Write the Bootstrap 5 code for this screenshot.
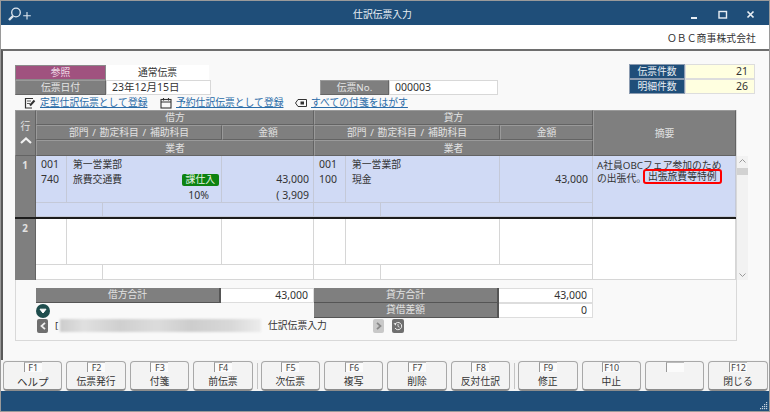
<!DOCTYPE html>
<html lang="ja"><head><meta charset="utf-8"><title>仕訳伝票入力</title>
<link rel="stylesheet" href="https://cdn.jsdelivr.net/npm/bootstrap@5.3.0/dist/css/bootstrap.min.css">
<style>
html,body{margin:0;padding:0;background:#fff}
body{font-family:"Noto Sans","Noto Sans CJK JP",sans-serif;font-size:9.8px;line-height:1;color:#333;overflow:hidden}
.app-win{width:770px;height:412px;border:1px solid #9a9a9a;background:#fff}
.title-bar{height:24px;background:#1f4e79;color:#e8eef4;font-size:9.8px;padding:3px 4px 0 9px}
.title-side{flex:1 1 0}
.title-ico{margin-left:-4px}
.win-btns{gap:17px;padding-right:10px}
.co-bar{height:24px;padding:4px 13px 0 0;font-size:9.8px;color:#333;letter-spacing:.1px}
.body-area{height:311px;background:#f9f9f9;border-top:2px solid #6e6e6e;border-left:2px solid #5a5a5a;padding:14px 0 0 12px;position:relative}
.fld{height:15px;display:flex;align-items:center;justify-content:center}
.lab-gray{background:#7f7f7f;color:#e4e4e4;border:1px solid #9a9a9a;border-right-color:#666;border-bottom-color:#666}
.lab-purple{background:#a0527f;color:#f0dbe7;border:1px solid #8b8b8b}
.lab-blue{background:#1f4e79;color:#e8eef4;border:1px solid #8b9bb0;width:56px}
.w-lab{width:91px}
.w-no{width:69px;margin-left:109px}
.val-plain{width:103px;background:#fff}
.val-input{background:#fff;border:1px solid #d8d8d8;justify-content:flex-start;padding-left:5px;font-size:10.5px}
.w-date{width:105px}
.w-num{width:109px}
.val-yel{width:70px;background:#ffffe0;border:1px solid #ddd;justify-content:flex-end;padding-right:6px;font-size:10.5px}
.right-block{margin-right:14px;margin-top:-1px}
.link-row{height:15px;padding:1px 0 0 9px;align-items:center}
.link-row a{color:#2a6ca8;text-decoration:underline;font-size:9.8px;white-space:nowrap}
.lk1{margin-left:4px;width:120px}
.lk2{margin-left:4px;width:119px}
.lk3{margin-left:4px}
.panel-box{width:722px;height:231px;border-bottom:1px solid #d9d9d9;box-shadow:inset 1px 0 #d9d9d9,inset -1px 0 #d9d9d9}
.slip-grid{display:grid;grid-template-columns:21px 31px 36px 119px 92px 32px 35px 119px 93px 143px;grid-template-rows:15px 15px 16px 47px 14px 2px 46px 15px 1px}
.hc{background:#7f7f7f;color:#e2e2e2;display:flex;align-items:center;justify-content:center;border-right:1px solid #636363;border-bottom:1px solid #636363;border-top:1px solid #9a9a9a;border-left:1px solid #9a9a9a;padding-top:1px;word-spacing:1.2px}
.hc-row{grid-row:1/4;grid-column:1;flex-direction:column;gap:6px;padding-top:0}
.rn{background:#7f7f7f;color:#e2e2e2;font-weight:700;display:flex;justify-content:center;padding-top:5px;border-right:1px solid #636363;grid-column:1}
.cell{border-right:1px solid #c4c9d8;border-bottom:1px solid #c4c9d8;padding:0 4px;display:flex;flex-direction:column;justify-content:space-around}
.blue-c{background:#d0daf5}
.white-c{background:#fff;border-color:#d6d6d6}
.thick{background:#1c1c1c;grid-column:1/11}
.ln{height:15px;display:flex;align-items:center;justify-content:space-between;white-space:nowrap;flex:none}
.ln-3{margin-top:1px}
.rt{justify-content:flex-end;font-size:10.5px}
.pct{padding-right:8px}
.code{font-size:10.5px}
.cell-tall{padding:1px 4px 2px 5px;justify-content:flex-start}
.name-c{padding-left:6px}
.tax-pill{background:#0d8210;color:#e6f5e6;padding:2px 4px;border-radius:2px;height:12px;display:flex;align-items:center;margin-right:-2px}
.memo{padding:3px 4px 0;line-height:13px;display:block;white-space:normal}
.maru{letter-spacing:-5px}
.hi-box{border:2px solid #f00;border-radius:3px;padding:0 3px;display:inline-block;line-height:11px;height:15px;vertical-align:top;margin:-3px 0 0 2px;white-space:nowrap}
.scroll-track{position:absolute;left:734px;top:105px;width:11px;height:124px;background:#f2f2f2;display:flex;flex-direction:column;justify-content:space-between;align-items:center;padding:3px 0}
.scroll-thumb{position:absolute;left:0;top:12px;width:11px;height:7px;background:#d2d2d2}
.tot-grid{display:grid;grid-template-columns:21px 185px 93px 185px 94px;grid-template-rows:15px 15px;margin-top:7px}
.tl{background:#7f7f7f;color:#e2e2e2;display:flex;align-items:center;justify-content:center;border-right:2px solid #555;border-bottom:1px solid #555}
.tv{background:#fff;border:1px solid #ddd;border-left:0;display:flex;align-items:center;justify-content:flex-end;padding-right:5px;font-size:10.5px}
.dot-wrap{grid-column:2;display:flex;align-items:center}
.dot-btn{width:14px;height:14px;border-radius:50%;background:#1e4d4d;display:flex;align-items:center;justify-content:center}
.nav-row{height:15px;padding-left:22px;align-items:center}
.sq-btn{width:11px;height:14px;border-radius:2px;display:flex;align-items:center;justify-content:center;flex:none}
.sq-dark{background:#6f6f6f}
.sq-light{background:#c9c9c9}
.sq-hist{margin-left:8px;width:12px}
.nav-br{margin-left:7px;width:4px}
.nav-ttl{margin-left:7px;width:105px}
.blur-bar{width:201px;height:13px;margin-left:1px;background:linear-gradient(90deg,#ccc,#e0e0e0 12%,#cfcfcf 30%,#dcdcdc 48%,#cdcdcd 65%,#d8d8d8 85%,#ececec);filter:blur(1px)}
.fkey-bar{height:31px;background:#f4f4f4;padding:1px 0 0 2px;gap:4px;align-items:flex-start}
.fkey{width:59.4px;height:30px;padding:0;background:#f3f3f3;border:1px solid #a8a8a8;border-bottom:2px solid #8c8c8c;border-radius:4px;color:#333;font-size:9.8px;line-height:1;display:flex;flex-direction:column;align-items:center;flex:none}
.fkey-lab{width:18px;height:10px;margin-top:0;border-left:1px solid #999;border-top:1px solid #bbb;background:#fbfbfb;font-size:9px;display:flex;align-items:center;justify-content:center;color:#444}
.fkey-txt{margin-top:5px;height:10px;font-size:9.8px;white-space:nowrap}
.fkey-big{font-size:10.5px}
.fkey-sep{width:1px;height:26px;background:#c4c4c4;margin:2px -1px 2px 0;flex:none}
.foot-bar{height:20px;background:#1f4e79;justify-content:flex-end;align-items:flex-end;padding:0 1px 1px 0}
.g-l1{grid-column:2/6}.g-r1{grid-column:6/10}.g-sum{grid-column:10;grid-row:1/4}
.g-l2{grid-column:2/5}.g-la{grid-column:5}.g-r2{grid-column:6/9}.g-ra{grid-column:9}
.g-n1{grid-row:4/7}.g-n2{grid-row:7/9}
.s-a{grid-column:3/5}.s-b{grid-column:7/9}
.b-a{grid-column:2/4}.b-b{grid-column:4/6}.b-c{grid-column:6/8}.b-d{grid-column:8/10}
.memo1{grid-column:10;grid-row:4/6}.memo2{grid-column:10;grid-row:7/9}
.r7{grid-row:7}.r8{grid-row:8}.c2{grid-column:2}.c5{grid-column:5}.c6{grid-column:6}.c9{grid-column:9}
.th-r{grid-row:6}
.c3{grid-column:3}
</style></head><body>
<div class="app-win d-flex flex-column">
 <div class="title-bar d-flex align-items-center">
  <div class="title-side d-flex align-items-center">
   <svg class="title-ico" width="27" height="18" viewBox="0 0 27 18" fill="none" stroke="#dfe7ef"><circle cx="10" cy="6.5" r="4.3" stroke-width="1.3"/><path d="M7 10 L3 14" stroke-width="2.4"/><path d="M21 6v7.5M17.2 9.7h7.6" stroke-width="1.1"/></svg>
  </div>
  <div>仕訳伝票入力</div>
  <div class="title-side d-flex justify-content-end win-btns align-items-center">
   <svg width="9" height="9" viewBox="0 0 9 9"><rect x="0" y="7" width="6" height="2" fill="#e8eef4"/></svg>
   <svg width="12" height="10" viewBox="0 0 12 10" fill="none" stroke="#e8eef4"><rect x="2" y="1.5" width="7.5" height="6.5" stroke-width="1.4"/></svg>
   <svg width="9" height="9" viewBox="0 0 9 9" fill="none" stroke="#e8eef4" stroke-width="1.7"><path d="M1.5 1.5l6 6M7.5 1.5l-6 6"/></svg>
  </div>
 </div>
 <div class="co-bar d-flex align-items-center justify-content-end">ＯＢＣ商事株式会社</div>
 <div class="body-area">
  <div class="d-flex justify-content-between">
   <div>
    <div class="d-flex"><div class="fld lab-purple w-lab">参照</div><div class="fld val-plain">通常伝票</div></div>
    <div class="d-flex"><div class="fld lab-gray w-lab">伝票日付</div><div class="fld val-input w-date">23年12月15日</div><div class="fld lab-gray w-no">伝票No.</div><div class="fld val-input w-num">000003</div></div>
   </div>
   <div class="right-block">
    <div class="d-flex"><div class="fld lab-blue">伝票件数</div><div class="fld val-yel">21</div></div>
    <div class="d-flex"><div class="fld lab-blue">明細件数</div><div class="fld val-yel">26</div></div>
   </div>
  </div>
  <div class="d-flex link-row">
   <svg width="12" height="12" viewBox="0 0 12 12" fill="none" stroke="#333"><path d="M9 1.5H1.5v9.5H8" stroke-width="1.2"/><path d="M3 4h4M3 6.5h3" stroke-width=".8"/><path d="M6 8.5l4.5-5" stroke-width="2"/></svg>
   <a href="#" class="lk1">定型仕訳伝票として登録</a>
   <svg width="12" height="12" viewBox="0 0 12 12" fill="none" stroke="#333"><rect x="1" y="2.5" width="10" height="8.5" stroke-width="1.1"/><path d="M1 5h10" stroke-width="1"/><path d="M3.5 1v2.5M8.5 1v2.5" stroke-width="1.1"/></svg>
   <a href="#" class="lk2">予約仕訳伝票として登録</a>
   <svg width="12" height="12" viewBox="0 0 12 12" fill="none" stroke="#333"><path d="M3 2.5h8.5v7H3L.5 6z" stroke-width="1"/><rect x="5.5" y="4.5" width="3.5" height="3" fill="#333" stroke="none"/></svg>
   <a href="#" class="lk3">すべての付箋をはがす</a>
  </div>
  <div class="panel-box">
   <div class="slip-grid">
    <div class="hc hc-row"><span>行</span><svg width="12" height="7" viewBox="0 0 12 7" fill="none" stroke="#f2f2f2" stroke-width="2.2"><path d="M1 6l5-4.5L11 6"/></svg></div>
    <div class="hc g-l1">借方</div>
    <div class="hc g-r1">貸方</div>
    <div class="hc g-sum">摘要</div>
    <div class="hc g-l2">部門 / 勘定科目 / 補助科目</div>
    <div class="hc g-la">金額</div>
    <div class="hc g-r2">部門 / 勘定科目 / 補助科目</div>
    <div class="hc g-ra">金額</div>
    <div class="hc g-l1">業者</div>
    <div class="hc g-r1">業者</div>

    <div class="rn g-n1">1</div>
    <div class="cell cell-tall blue-c c2"><div class="ln code">001</div><div class="ln code">740</div></div>
    <div class="cell cell-tall name-c blue-c s-a"><div class="ln">第一営業部</div><div class="ln">旅費交通費<span class="tax-pill">課仕入</span></div><div class="ln ln-3 rt pct">10%</div></div>
    <div class="cell cell-tall blue-c c5"><div class="ln"></div><div class="ln rt">43,000</div><div class="ln ln-3 rt">( 3,909</div></div>
    <div class="cell cell-tall blue-c c6"><div class="ln code">001</div><div class="ln code">100</div></div>
    <div class="cell cell-tall name-c blue-c s-b"><div class="ln">第一営業部</div><div class="ln">現金</div></div>
    <div class="cell cell-tall blue-c c9"><div class="ln"></div><div class="ln rt">43,000</div></div>
    <div class="cell blue-c memo memo1">A社員OBCフェア参加のための出張代<span class="maru">。</span><span class="hi-box">出張旅費等特例</span></div>
    <div class="cell blue-c b-a"></div>
    <div class="cell blue-c b-b"></div>
    <div class="cell blue-c b-c"></div>
    <div class="cell blue-c b-d"></div>
    <div class="thick th-r"></div>

    <div class="rn g-n2">2</div>
    <div class="cell white-c c2 r7"></div>
    <div class="cell white-c s-a r7"></div>
    <div class="cell white-c c5 r7"></div>
    <div class="cell white-c c6 r7"></div>
    <div class="cell white-c s-b r7"></div>
    <div class="cell white-c c9 r7"></div>
    <div class="cell white-c memo2"></div>
    <div class="cell white-c b-a r8"></div>
    <div class="cell white-c b-b r8"></div>
    <div class="cell white-c b-c r8"></div>
    <div class="cell white-c b-d r8"></div>
   </div>
   <div class="tot-grid">
    <div></div><div class="tl">借方合計</div><div class="tv">43,000</div><div class="tl">貸方合計</div><div class="tv">43,000</div>
    <div class="dot-wrap"><div class="dot-btn"><svg width="8" height="6" viewBox="0 0 8 6"><path d="M1 1.2h6L4 5z" fill="#fff" stroke="#fff" stroke-linejoin="round"/></svg></div></div>
    <div class="c3"></div><div class="tl">貸借差額</div><div class="tv">0</div>
   </div>
   <div class="d-flex nav-row">
    <div class="sq-btn sq-dark"><svg width="6" height="8" viewBox="0 0 6 8" fill="none" stroke="#eee" stroke-width="1.8"><path d="M5 .8L1.5 4 5 7.2"/></svg></div>
    <span class="nav-br">[</span>
    <div class="blur-bar"></div>
    <span class="nav-ttl">仕訳伝票入力</span>
    <div class="sq-btn sq-light"><svg width="6" height="8" viewBox="0 0 6 8" fill="none" stroke="#888" stroke-width="1.8"><path d="M1 .8L4.5 4 1 7.2"/></svg></div>
    <div class="sq-btn sq-dark sq-hist"><svg width="10" height="10" viewBox="0 0 10 10" fill="none" stroke="#eee"><path d="M2 3.2A3.6 3.6 0 1 1 2 7" stroke-width="1"/><path d="M5 3v2.4l1.5.8" stroke-width=".8"/><path d="M.5 2.2l2.5 0 0 2.5z" fill="#eee" stroke="none"/></svg></div>
   </div>
  </div>
  <div class="scroll-track">
   <svg width="7" height="4" viewBox="0 0 7 4" fill="none" stroke="#999"><path d="M.5 3.5L3.5.5l3 3"/></svg>
   <div class="scroll-thumb"></div>
   <svg width="7" height="4" viewBox="0 0 7 4" fill="none" stroke="#999"><path d="M.5.5l3 3 3-3"/></svg>
  </div>
 </div>
 <div class="fkey-bar d-flex">
  <button class="btn fkey"><span class="fkey-lab">F1</span><span class="fkey-txt fkey-big">ヘルプ</span></button>
  <button class="btn fkey"><span class="fkey-lab">F2</span><span class="fkey-txt">伝票発行</span></button>
  <button class="btn fkey"><span class="fkey-lab">F3</span><span class="fkey-txt">付箋</span></button>
  <button class="btn fkey"><span class="fkey-lab">F4</span><span class="fkey-txt">前伝票</span></button>
  <div class="fkey-sep"></div>
  <button class="btn fkey"><span class="fkey-lab">F5</span><span class="fkey-txt">次伝票</span></button>
  <button class="btn fkey"><span class="fkey-lab">F6</span><span class="fkey-txt">複写</span></button>
  <button class="btn fkey"><span class="fkey-lab">F7</span><span class="fkey-txt">削除</span></button>
  <button class="btn fkey"><span class="fkey-lab">F8</span><span class="fkey-txt">反対仕訳</span></button>
  <div class="fkey-sep"></div>
  <button class="btn fkey"><span class="fkey-lab">F9</span><span class="fkey-txt">修正</span></button>
  <button class="btn fkey"><span class="fkey-lab">F10</span><span class="fkey-txt">中止</span></button>
  <button class="btn fkey"><span class="fkey-lab"></span><span class="fkey-txt"></span></button>
  <button class="btn fkey"><span class="fkey-lab">F12</span><span class="fkey-txt">閉じる</span></button>
 </div>
 <div class="foot-bar d-flex"><svg width="9" height="9" viewBox="0 0 9 9" fill="#c8d4e0"><rect x="7" y="1" width="1.2" height="1.2"/><rect x="5" y="3" width="1.2" height="1.2"/><rect x="7" y="3" width="1.2" height="1.2"/><rect x="3" y="5" width="1.2" height="1.2"/><rect x="5" y="5" width="1.2" height="1.2"/><rect x="7" y="5" width="1.2" height="1.2"/><rect x="1" y="7" width="1.2" height="1.2"/><rect x="3" y="7" width="1.2" height="1.2"/><rect x="5" y="7" width="1.2" height="1.2"/><rect x="7" y="7" width="1.2" height="1.2"/></svg></div>
</div>
</body></html>
